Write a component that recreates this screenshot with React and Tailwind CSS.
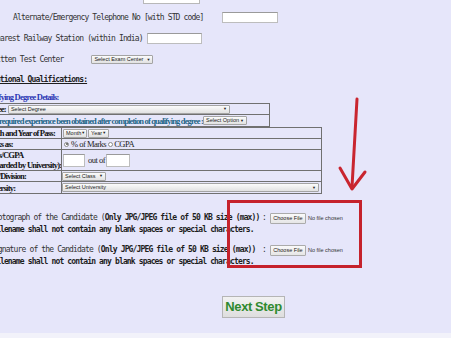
const mono = "font-['DejaVu_Sans_Mono',monospace] text-[8px] tracking-[-0.85px] whitespace-nowrap";
const serifB = "font-['Liberation_Serif',serif] font-bold text-[8.5px] tracking-[-0.75px] whitespace-nowrap leading-[10px]";
const serifR = "font-['Liberation_Serif',serif] text-[8.5px] tracking-[-0.5px] whitespace-nowrap leading-[10px] text-[#222]";

function Sel({ className, children }) {
  return (
    <div
      className={
        "flex items-center justify-between shrink-0 h-[9px] border border-[#a4a4a4] rounded-[1px] bg-gradient-to-b from-[#fbfbfb] to-[#e2e2e2] pl-[2px] pr-[2px] font-['Liberation_Sans',sans-serif] text-[5.5px] leading-[7px] text-[#222] whitespace-nowrap " +
        className
      }
    >
      <span>{children}</span>
      <span className="text-[4px] leading-[4px]">▼</span>
    </div>
  );
}

function Inp({ className }) {
  return <div className={"shrink-0 bg-white border border-[#bdbdbd] border-t-[#9a9a9a] " + className} />;
}

function Radio({ checked }) {
  return (
    <span className="flex items-center justify-center w-[5px] h-[5px] rounded-full border border-[#8a8a8a] bg-white shrink-0">
      {checked && <span className="w-[2px] h-[2px] rounded-full bg-[#555]" />}
    </span>
  );
}

function FileRow({ first }) {
  return (
    <div className="flex items-start">
      <div className={mono + " ml-[-38px] w-[300px] leading-[12px] text-[#333]"}>
        <div>
          {first} of the Candidate (<span className="font-bold text-[#1e1e1e]">Only JPG/JPEG file of 50 KB size (max))</span>
        </div>
        <div className="ml-[30px] font-bold text-[#1e1e1e]">Filename shall not contain any blank spaces or special characters.</div>
      </div>
      <span className={mono + " leading-[12px] text-[#333]"}>:</span>
      <div className="ml-[4px] mt-[1px] flex items-center">
        <div className="h-[11px] w-[36px] flex items-center justify-center border border-[#ababab] rounded-[1px] bg-gradient-to-b from-[#fafafa] to-[#e6e6e6] font-['Liberation_Sans',sans-serif] text-[5.5px] text-[#222]">
          Choose File
        </div>
        <span className="ml-[2px] font-['Liberation_Sans',sans-serif] text-[5.5px] text-[#333]">No file chosen</span>
      </div>
    </div>
  );
}

export default function App() {
  return (
    <div className="relative w-[451px] h-[338px] overflow-hidden bg-[#e6e6fa] text-[#333]">
      <div className="flex flex-col">
        <div className="ml-[143px] w-[57px] h-[4px] bg-white border-x border-b border-[#b8b8b8]" />

        <div className="mt-[8px] h-[11px] flex items-center">
          <span className={mono + " ml-[13px]"}>Alternate/Emergency Telephone No [with STD code]</span>
          <Inp className="ml-[19px] w-[56px] h-[11px]" />
        </div>

        <div className="mt-[10px] h-[11px] flex items-center">
          <span className={mono + " ml-[-8px]"}>Nearest Railway Station (within India)</span>
          <Inp className="ml-[4px] w-[55px] h-[11px]" />
        </div>

        <div className="mt-[11px] h-[9px] flex items-center">
          <span className={mono + " ml-[-12px]"}>Written Test Center</span>
          <Sel className="ml-[28px] w-[62px]">Select Exam Center</Sel>
        </div>

        <div className="mt-[11px] h-[10px] flex items-center">
          <span className={mono + " ml-[-20px] font-bold underline text-[#1e1e1e]"}>Educational Qualifications:</span>
        </div>

        <div className="mt-[7px] h-[10px] flex items-center">
          <span className={serifB + " ml-[-18px] text-[#2a36b4]"}>Qualifying Degree Details:</span>
        </div>

        <div className="mt-[1px] ml-[-20px] w-[290px] border border-[#707070]">
          <div className="h-[11px] flex items-center border-b border-[#707070]">
            <span className={serifB + " ml-[2px] text-[#111]"}>Degree:</span>
            <Sel className="ml-[2px] w-[222px]">Select Degree</Sel>
          </div>
          <div className="h-[11px] flex items-center">
            <div className="w-[204px] ml-[18px] shrink-0 flex items-center">
              <span className={serifB + " text-[#1d6488] tracking-[-0.85px]"}>required experience been obtained after completion of qualifying degree :</span>
            </div>
            <Sel className="w-[44px]">Select Option</Sel>
          </div>
        </div>

        <div className="ml-[-20px] w-[342px] border border-[#707070] text-[#111]">
          <div className="flex h-[11px] border-b border-[#707070]">
            <div className="w-[81px] shrink-0 border-r border-[#707070] flex items-center overflow-hidden">
              <span className={serifB + " ml-[2px]"}>Month and Year of Pass:</span>
            </div>
            <div className="flex items-center gap-[1px] ml-[1px]">
              <Sel className="w-[24px]">Month</Sel>
              <Sel className="w-[21px]">Year</Sel>
            </div>
          </div>
          <div className="flex h-[11px] border-b border-[#707070]">
            <div className="w-[81px] shrink-0 border-r border-[#707070] flex items-center overflow-hidden">
              <span className={serifB + " ml-[2px]"}>Marks as:</span>
            </div>
            <div className="flex items-center ml-[2px]">
              <Radio checked />
              <span className={serifR + " ml-[2px]"}>% of Marks</span>
              <span className="ml-[2px]"><Radio /></span>
              <span className={serifR + " ml-[1px]"}>CGPA</span>
            </div>
          </div>
          <div className="flex h-[21px] border-b border-[#707070]">
            <div className="w-[81px] shrink-0 border-r border-[#707070] flex flex-col justify-center overflow-hidden">
              <span className={serifB + " ml-[0px]"}>Marks/CGPA</span>
              <span className={serifB + " ml-[6px]"}>(Awarded by University):</span>
            </div>
            <div className="flex items-center ml-[1px]">
              <Inp className="w-[22px] h-[13px]" />
              <span className={serifR + " ml-[3px]"}>out of</span>
              <Inp className="ml-[1px] w-[24px] h-[13px]" />
            </div>
          </div>
          <div className="flex h-[11px] border-b border-[#707070]">
            <div className="w-[81px] shrink-0 border-r border-[#707070] flex items-center overflow-hidden">
              <span className={serifB + " ml-[2px]"}>Class/Division:</span>
            </div>
            <div className="flex items-center">
              <Sel className="w-[44px]">Select Class</Sel>
            </div>
          </div>
          <div className="flex h-[11px]">
            <div className="w-[81px] shrink-0 border-r border-[#707070] flex items-center overflow-hidden">
              <span className={serifB + " ml-[2px]"}>University:</span>
            </div>
            <div className="flex items-center">
              <Sel className="w-[257px]">Select University</Sel>
            </div>
          </div>
        </div>

        <div className="mt-[18px]">
          <FileRow first="Upload Photograph" />
        </div>
        <div className="mt-[8px]">
          <FileRow first="Upload Signature" />
        </div>

        <div className="mt-[28px] ml-[222px] w-[63px] h-[22px] flex items-center justify-center border border-[#b5b5b5] bg-gradient-to-b from-[#f2f2f2] to-[#dedede] font-['Liberation_Sans',sans-serif] font-bold text-[13px] tracking-[-0.4px] text-[#2f8a2f]">
          Next Step
        </div>

        <div className="mt-[15px] h-[6px] bg-[#f2f2fa]" />
      </div>

      <div className="absolute left-[227px] top-[200px] w-[135px] h-[68px] border-[3px] border-[#c5222c]" />
      <svg className="absolute left-0 top-0 pointer-events-none" width="451" height="338" viewBox="0 0 451 338">
        <path d="M357 99 L352 187" stroke="#c9252f" strokeWidth="3" strokeLinecap="round" fill="none" />
        <path d="M340 168 L352 189 L365 172" stroke="#c9252f" strokeWidth="3" strokeLinecap="round" strokeLinejoin="round" fill="none" />
      </svg>
    </div>
  );
}
